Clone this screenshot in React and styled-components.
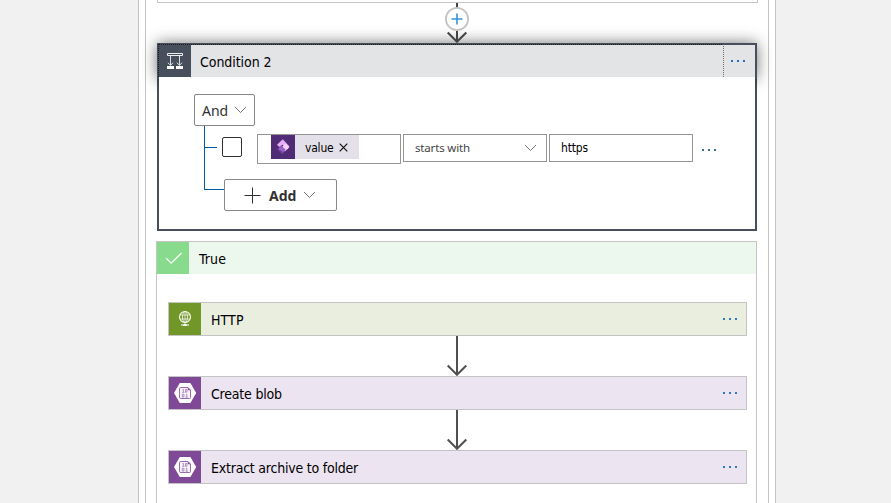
import React from "react";
import styled, { createGlobalStyle } from "styled-components";

const Global = createGlobalStyle`
  * { box-sizing: border-box; }
  body { margin: 0; overflow: hidden; background: #f1f1f1; }
`;

const Page = styled.div`
  width: 891px;
  height: 503px;
  overflow: hidden;
  display: flex;
  background: #f1f1f1;
  font-family: "DejaVu Sans Condensed", "DejaVu Sans", sans-serif;
  font-stretch: condensed;
  font-size: 14px;
  color: #000;
`;

const Scope = styled.div`
  width: 638px;
  height: 503px;
  margin-left: 138px;
  padding: 0 6px;
  border: solid #c4c4c4;
  border-width: 0 1px;
  background: #fff;
`;

const Lane = styled.main`
  height: 503px;
  border: solid #c4c4c4;
  border-width: 0 1px;
  padding: 0 10px;
  display: flex;
  flex-direction: column;
`;

const PreviousCard = styled.div`
  height: 3px;
  flex: none;
  margin-left: 1px;
  width: 601px;
  border: 1px solid #c4c4c4;
  border-top: 0;
`;

const Connector = styled.div`
  height: 40px;
  flex: none;
  display: flex;
  justify-content: center;
  svg { display: block; }
`;

const InsertConnector = styled(Connector)`
  position: relative;
  z-index: 1;
`;

const ConditionCard = styled.section`
  width: 600px;
  height: 188px;
  flex: none;
  margin-left: 1px;
  border: 2px solid #474f5c;
  background: #fff;
  position: relative;
  z-index: 0;
`;

const ConditionHeader = styled.header`
  height: 32px;
  display: flex;
  align-items: center;
  background: #e3e4e6;
`;

const HeaderGlow = styled.div`
  position: absolute;
  z-index: -1;
  inset: -2px -2px auto;
  height: 36px;
  background: #474f5c;
  box-shadow: 0 0 15px 0 rgba(0, 0, 0, 0.55);
`;

const FocusRing = styled.div`
  position: absolute;
  top: -1px;
  left: -1px;
  width: 566px;
  height: 33px;
  border: 1px dotted #1b1b1b;
  border-right-color: #707070;
  border-bottom: 0;
`;

const CardIcon = styled.div`
  width: 32px;
  height: 32px;
  flex: none;
  background: ${(p) => p.$color};
  svg { display: block; }
`;

const Title = styled.span`
  margin-left: ${(p) => p.$gap || 10}px;
  padding-top: 2px;
  line-height: 20px;
  white-space: nowrap;
  letter-spacing: ${(p) => p.$spacing || 0}px;
`;

const Dots = styled.span`
  display: flex;
  gap: 4px;
  margin-left: auto;
  margin-right: ${(p) => p.$right}px;
  &::before, &::after, i { content: ""; width: 2px; height: 2px; background: ${(p) => p.$color || "#2f78bf"}; }
`;

const MoreDots = (props) => <Dots {...props}><i /></Dots>;

const ConditionBody = styled.div`
  height: 152px;
  padding: 17px 0 0 35px;
  background: #fff;
`;

const SmallButton = styled.button`
  width: ${(p) => p.$width}px;
  height: 32px;
  flex: none;
  padding: 0 7px;
  display: flex;
  align-items: center;
  border: 1px solid #8a8886;
  border-radius: 2px;
  background: #fff;
  color: #323130;
  font: ${(p) => (p.$bold ? 700 : 400)} 14px "Noto Sans", sans-serif;
  svg { flex: none; }
`;

const ButtonLabel = styled.span`
  width: ${(p) => p.$width}px;
  text-align: left;
  padding-top: 1px;
`;

const AddContent = styled.span`
  display: flex;
  align-items: center;
  margin-left: 12px;
  ${ButtonLabel} { margin-left: 8px; }
`;

const Branches = styled.div`
  width: 520px;
  margin-left: 10px;
`;

const RuleRow = styled.div`
  height: 42px;
  width: 540px;
  display: flex;
  align-items: flex-start;
  border-left: 1px solid #005ba1;
`;

const Twig = styled.div`
  width: ${(p) => p.$width}px;
  height: ${(p) => p.$height}px;
  flex: none;
  border-bottom: 1px solid #005ba1;
`;

const Checkbox = styled.div`
  width: 20px;
  height: 20px;
  flex: none;
  margin: 11px 15px 0 5px;
  border: 1px solid #323130;
  border-radius: 2px;
`;

const Field = styled.div`
  width: 144px;
  height: ${(p) => p.$height || 28}px;
  flex: none;
  margin: 8px 2px 0 0;
  padding-left: ${(p) => p.$pad || 11}px;
  display: flex;
  align-items: center;
  border: 1px solid #949494;
  background: #fff;
  font-size: 12px;
`;

const SelectText = styled.span`
  width: 109px;
  padding-bottom: 1px;
  font-family: "Noto Sans", sans-serif;
  font-size: 11.5px;
  letter-spacing: -0.17px;
  color: #444;
`;

const Token = styled.div`
  height: 24px;
  width: 88px;
  align-self: flex-start;
  display: flex;
  align-items: center;
  background: #e4e0ea;
  > svg { flex: none; }
`;

const TokenText = styled.span`
  margin-left: 10px;
  width: 34px;
  letter-spacing: -0.2px;
  padding-top: 1px;
`;

const InputText = styled.span`
  margin-left: 1px;
  letter-spacing: -0.15px;
`;

const RuleMore = styled.div`
  margin: 23px 0 0 7px;
`;

const AddRow = styled.div`
  height: 32px;
  display: flex;
  align-items: flex-start;
`;

const AddTwig = styled.div`
  width: 20px;
  height: 22px;
  border: solid #005ba1;
  border-width: 0 0 1px 1px;
`;

const AddButtonWrap = styled.div`
  margin-top: 11px;
`;

const TrueScope = styled.section`
  width: 601px;
  height: 300px;
  flex: none;
  margin-top: 10px;
  border: 1px solid #c4c4c4;
  background: #fff;
`;

const TrueHeader = styled.header`
  height: 32px;
  display: flex;
  align-items: center;
  background: #ecf7ee;
`;

const Steps = styled.div`
  padding: 28px 9px 0 11px;
`;

const StepCard = styled.div`
  height: 34px;
  width: 579px;
  display: flex;
  align-items: center;
  border: 1px solid #c4c4c4;
  background: ${(p) => p.$tint};
`;

const StepConnector = styled(Connector)`
  width: 578px;
`;

const Chevron = () => (
  <svg width="13" height="8" viewBox="0 0 13 8" fill="none" stroke="#777" strokeWidth="1">
    <path d="M1 1 6.5 6.5 12 1" />
  </svg>
);

const PlusIcon = () => (
  <svg width="17" height="17" viewBox="0 0 17 17" fill="none" stroke="#323130">
    <path d="M.5 8.5h16M8.5.5v16" />
  </svg>
);

const ConditionIcon = () => (
  <svg width="32" height="32" viewBox="0 0 32 32" fill="none" stroke="#fff">
    <path d="M8.5 8.5h15v2h-15z" strokeWidth=".9" />
    <path d="M11.5 11v9M20.5 11v9M8.8 17.7l2.7 2.6 2.7-2.6M17.8 17.7l2.7 2.6 2.7-2.6" strokeWidth=".8" />
    <path d="M8 21h7v3H8zM17 21h7v3h-7z" fill="#fff" stroke="none" />
  </svg>
);

const CheckIcon = () => (
  <svg width="32" height="32" viewBox="0 0 32 32" fill="none" stroke="#fff" strokeWidth="1.3">
    <path d="m9.2 16.2 5 5L24.5 11" />
  </svg>
);

const GlobeIcon = () => (
  <svg width="32" height="32" viewBox="0 0 32 32" fill="none" stroke="#fff">
    <circle cx="16" cy="14" r="5.5" strokeWidth="1.1" />
    <ellipse cx="16" cy="14" rx="2.5" ry="5.5" strokeWidth=".8" />
    <path d="M11 12h10M11 16h10M16 8.5v13" strokeWidth=".7" />
    <path d="M12 22h8" />
    <path d="M14.3 21.2h3.4v1.8h-3.4z" fill="#fff" stroke="none" />
  </svg>
);

const BlobIcon = () => (
  <svg width="32" height="32" viewBox="0 0 32 32">
    <path d="M10.8 6h10.6L27.2 16l-5.8 10H10.8L5 16z" fill="#fff" />
    <path d="M11.8 10.5h7.2l2.5 2.5v7.5q0 1-1 1h-8.7q-1.3 0-1.3-1.2v-8.5q0-1.3 1.3-1.3z" fill="#f8f3fa" stroke="#804998" strokeWidth=".8" />
    <path d="M18.8 10.5v2.7h2.7z" fill="#804998" />
    <g fill="none" stroke="#9a6cae" strokeWidth=".7">
      <path d="M13.4 12.4h1v2.8M13.2 15.3h2.3M16.5 12.5H18v2.7h-1.5zM13.3 17.3h1.6v2.8h-1.6zM16.8 17.3h1v2.8M16.5 20.2h2.3" />
    </g>
  </svg>
);

const TriggerIcon = () => (
  <svg width="24" height="24" viewBox="0 0 24 24">
    <path d="M0 0h24v24H0z" fill="#502b76" />
    <path d="M6.2 14.2 10 10.5l5.5 4.3-4.2 4.5z" fill="#7541a5" />
    <path d="m11.8 4.3 6.4 7-1.6 3.2-5.1-4.8L8.4 12 6 9.8z" fill="#e7adf8" />
    <path d="m14.5 8.5 4 3.6-4.5 4.2-3.7-3.5z" fill="#f7cdff" />
    <path d="m10.8 11 3.8 3.6-2 2.3-5.3-3z" fill="#9a65c6" />
  </svg>
);

const CloseIcon = () => (
  <svg width="9" height="9" viewBox="0 0 9 9" stroke="#111" strokeWidth="1.2">
    <path d="m.7.7 7.6 7.6M8.3.7.7 8.3" />
  </svg>
);

const DownArrow = () => (
  <svg width="22" height="40" viewBox="0 0 22 40" fill="none" stroke="#505050" strokeWidth="2">
    <path d="M11 0v39M1.7 29.5 11 38.8l9.3-9.3" />
  </svg>
);

const InsertArrow = () => (
  <svg width="26" height="40" viewBox="0 0 26 40" fill="none" stroke="#444" strokeWidth="2">
    <path d="M13 0v39M3.7 29.5 13 38.8l9.3-9.3" />
    <circle cx="13" cy="16" r="11.1" fill="#fff" stroke="#c4c4c4" strokeWidth="1.8" />
    <path d="M7.5 16h11M13 10.5v11" stroke="#3392df" strokeWidth="1.6" />
  </svg>
);

const steps = [
  { title: "HTTP", color: "#709727", tint: "#eaeedf", Icon: GlobeIcon, spacing: 0.1 },
  { title: "Create blob", color: "#804998", tint: "#ece4f0", Icon: BlobIcon, spacing: -0.2 },
  { title: "Extract archive to folder", color: "#804998", tint: "#ece4f0", Icon: BlobIcon, spacing: -0.22 },
];

export default function App() {
  return (
    <Page>
      <Global />
      <Scope>
        <Lane>
          <PreviousCard />
          <InsertConnector><InsertArrow /></InsertConnector>
          <ConditionCard>
            <HeaderGlow />
            <ConditionHeader>
              <CardIcon $color="#474f5c"><ConditionIcon /></CardIcon>
              <Title $gap={9} $spacing={-0.05}>Condition 2</Title>
              <MoreDots $right={10} $color="#2071c5" />
            </ConditionHeader>
            <FocusRing />
            <ConditionBody>
              <SmallButton $width={61}>
                <ButtonLabel $width={33}>And</ButtonLabel>
                <Chevron />
              </SmallButton>
              <Branches>
                <RuleRow>
                  <Twig $width={12} $height={22} />
                  <Checkbox />
                  <Field $height={30} $pad={13}>
                    <Token>
                      <TriggerIcon />
                      <TokenText>value</TokenText>
                      <CloseIcon />
                    </Token>
                  </Field>
                  <Field><SelectText>starts with</SelectText><Chevron /></Field>
                  <Field $pad={10}><InputText>https</InputText></Field>
                  <RuleMore><MoreDots $right={0} $color="#386f98" /></RuleMore>
                </RuleRow>
                <AddRow>
                  <AddTwig />
                  <AddButtonWrap>
                    <SmallButton $width={113} $bold>
                      <AddContent>
                        <PlusIcon />
                        <ButtonLabel $width={34}>Add</ButtonLabel>
                        <Chevron />
                      </AddContent>
                    </SmallButton>
                  </AddButtonWrap>
                </AddRow>
              </Branches>
            </ConditionBody>
          </ConditionCard>
          <TrueScope>
            <TrueHeader>
              <CardIcon $color="#88da8d"><CheckIcon /></CardIcon>
              <Title $spacing={0.15}>True</Title>
            </TrueHeader>
            <Steps>
              {steps.map(({ title, color, tint, Icon, spacing }, i) => (
                <React.Fragment key={title}>
                  {i > 0 && <StepConnector><DownArrow /></StepConnector>}
                  <StepCard $tint={tint}>
                    <CardIcon $color={color}><Icon /></CardIcon>
                    <Title $spacing={spacing}>{title}</Title>
                    <MoreDots $right={9} />
                  </StepCard>
                </React.Fragment>
              ))}
            </Steps>
          </TrueScope>
        </Lane>
      </Scope>
    </Page>
  );
}
